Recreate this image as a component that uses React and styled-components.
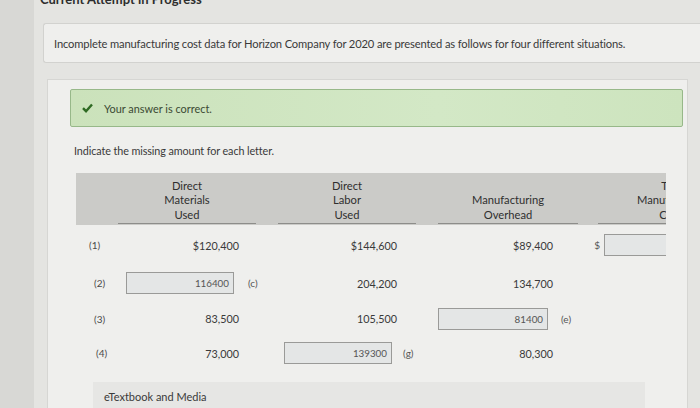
import React from "react";
import styled, { createGlobalStyle } from "styled-components";

const GlobalStyle = createGlobalStyle`
  body {
    margin: 0;
    background: #e1e1de;
    font-family: Lato, "Open Sans", sans-serif;
    color: #3a3a3a;
  }
`;

const Page = styled.div`
  width: 700px;
  height: 408px;
  overflow: hidden;
  background: linear-gradient(90deg, #d8d8d5 0, #d8d8d5 34px, #e4e4e1 34px);
`;

const Title = styled.div`
  margin: -9px 0 0 40px;
  height: 20px;
  font-size: 13px;
  font-weight: 700;
  color: #2e2e2e;
`;

const Intro = styled.div`
  margin: 12px 0 0 43px;
  height: 38px;
  display: flex;
  align-items: center;
  padding-left: 10px;
  background: #efefed;
  border: 1px solid #d2d2cf;
  border-right: none;
  border-radius: 3px 0 0 3px;
  font-size: 11.2px;
  letter-spacing: -0.15px;
`;

const Card = styled.div`
  margin: 16px 12px 0 47px;
  height: 340px;
  background: #efefed;
  border: 1px solid #d6d6d3;
  border-bottom: none;
  padding: 9px 0 0 22px;
`;

const Alert = styled.div`
  width: 600px;
  height: 36px;
  display: flex;
  align-items: center;
  gap: 11px;
  padding-left: 11px;
  background: linear-gradient(90deg, #cbe2bb, #d3e8c6 60%, #cde4be);
  border: 1px solid #97b889;
  border-radius: 2px;
  font-size: 10.9px;
  color: #3b4a33;
`;

const Prompt = styled.div`
  margin: 17px 0 0 4px;
  font-size: 10.8px;
  letter-spacing: -0.1px;
`;

const TableClip = styled.div`
  margin: 16px 0 0 6px;
  width: 590px;
  overflow: hidden;
`;

const HeadBand = styled.div`
  display: grid;
  grid-template-columns: 42px 138px 22px 138px 22px 140px 20px 150px;
  height: 52px;
  background: #cbcbc8;
`;

const HeadCell = styled.div`
  grid-column: ${(p) => p.$col};
  display: flex;
  flex-direction: column;
  justify-content: flex-end;
  align-items: center;
  padding-bottom: 1px;
  border-bottom: 1px solid #8d8d8a;
  margin-bottom: 1px;
  font-size: 11.2px;
  line-height: 14.5px;
  color: #2f2f2f;
  white-space: nowrap;
`;

const Row = styled.div`
  display: grid;
  grid-template-columns: 50px 108px 50px 108px 46px 110px 56px 70px;
  height: ${(p) => p.$h}px;
  align-items: center;
  font-size: 10.8px;
`;

const RowLabel = styled.div`
  padding-left: ${(p) => p.$indent}px;
  color: #4a4a4a;
  font-size: 10px;
`;

const Value = styled.div`
  text-align: right;
  margin-right: -5px;
`;

const Input = styled.div`
  height: 22px;
  box-sizing: border-box;
  border: 1px solid #9a9a98;
  background: #e4e6e6;
  display: flex;
  align-items: center;
  justify-content: flex-end;
  padding-right: 4px;
  font-size: 9.8px;
  color: #555;
`;

const Letter = styled.div`
  padding-left: ${(p) => p.$indent}px;
  text-align: ${(p) => (p.$right ? "right" : "left")};
  padding-right: ${(p) => (p.$right ? 4 : 0)}px;
  color: #555;
  font-size: 10px;
`;

const Footer = styled.div`
  margin: 12px 0 0 23px;
  width: 541px;
  height: 28px;
  display: flex;
  align-items: center;
  padding-left: 11px;
  background: #e6e6e4;
  font-size: 11px;
`;

const Check = () => (
  <svg width="11" height="10" viewBox="0 0 11 10">
    <path d="M1 5.2 L4 8.2 L10 1.5" fill="none" stroke="#2e6a23" strokeWidth="2.4" />
  </svg>
);

const rows = [
  ["(1)", 13, 40, <Value>$120,400</Value>, null, <Value>$144,600</Value>, null, <Value>$89,400</Value>, <Letter $right>$</Letter>, <Input />],
  ["(2)", 18, 36, <Input>116400</Input>, <Letter $indent={14}>(c)</Letter>, <Value>204,200</Value>, null, <Value>134,700</Value>, null, null],
  ["(3)", 18, 35, <Value>83,500</Value>, null, <Value>105,500</Value>, null, <Input>81400</Input>, <Letter $indent={13}>(e)</Letter>, null],
  ["(4)", 20, 34, <Value>73,000</Value>, null, <Input>139300</Input>, <Letter $indent={11}>(g)</Letter>, <Value>80,300</Value>, null, null],
];

export default function App() {
  return (
    <Page>
      <GlobalStyle />
      <Title>Current Attempt in Progress</Title>
      <Intro>
        Incomplete manufacturing cost data for Horizon Company for 2020 are presented as follows for four different situations.
      </Intro>
      <Card>
        <Alert>
          <Check />
          Your answer is correct.
        </Alert>
        <Prompt>Indicate the missing amount for each letter.</Prompt>
        <TableClip>
          <HeadBand>
            <HeadCell $col={2}>
              <span>Direct</span>
              <span>Materials</span>
              <span>Used</span>
            </HeadCell>
            <HeadCell $col={4}>
              <span>Direct</span>
              <span>Labor</span>
              <span>Used</span>
            </HeadCell>
            <HeadCell $col={6}>
              <span>Manufacturing</span>
              <span>Overhead</span>
            </HeadCell>
            <HeadCell $col={8}>
              <span>Total</span>
              <span>Manufacturing</span>
              <span>Costs</span>
            </HeadCell>
          </HeadBand>
          {rows.map(([label, indent, h, ...cells]) => (
            <Row key={label} $h={h}>
              <RowLabel $indent={indent}>{label}</RowLabel>
              {cells.map((c, i) => (
                <React.Fragment key={i}>{c || <div />}</React.Fragment>
              ))}
            </Row>
          ))}
        </TableClip>
        <Footer>eTextbook and Media</Footer>
      </Card>
    </Page>
  );
}
